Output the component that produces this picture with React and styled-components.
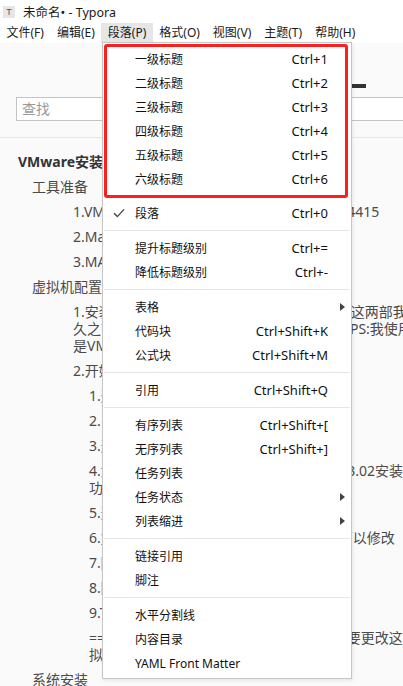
import React from 'react';
import styled, { createGlobalStyle } from 'styled-components';

const GlobalStyle = createGlobalStyle`
  html, body {
    margin: 0;
    padding: 0;
  }
  body {
    background: #fafafa;
    overflow: hidden;
    font-family: "Noto Sans", "Noto Sans CJK SC", sans-serif;
  }
`;

const Window = styled.div`
  position: relative;
  width: 403px;
  height: 686px;
  overflow: hidden;
  background: #fafafa;
`;

const TitleBar = styled.div`
  height: 23px;
  display: flex;
  align-items: center;
  padding-left: 3px;
  background: #fff;
`;

const AppIcon = styled.div`
  width: 12px;
  height: 12px;
  background: #e6e6e6;
  color: #555;
  font: 9px "Liberation Sans", sans-serif;
  display: flex;
  align-items: center;
  justify-content: center;
`;

const Title = styled.span`
  margin-left: 8px;
  font-size: 12.5px;
  color: #1a1a1a;
`;

const MenuBar = styled.div`
  height: 20px;
  display: flex;
  background: #fff;
`;

const MenuTitle = styled.div`
  padding: 0 6.5px;
  line-height: 20px;
  font-size: 12px;
  color: #1a1a1a;
  white-space: nowrap;
  background: ${p => (p.$open ? '#e6e6e6' : 'transparent')};
`;

const Sidebar = styled.div`
  background: #fafafa;
`;

const SidebarHeader = styled.div`
  height: 54px;
  display: flex;
  align-items: flex-start;
`;

const TabMark = styled.div`
  margin: 41px 0 0 352px;
  width: 14px;
  height: 4px;
  background: #333;
`;

const SearchRow = styled.div`
  padding: 0 0 16px 16px;
  border-bottom: 1px solid #e6e6e6;
`;

const SearchBox = styled.div`
  width: 600px;
  height: 22px;
  border: 1px solid #c4c4c4;
  border-right: none;
  background: #fff;
  padding-left: 5px;
  font-size: 14px;
  line-height: 22px;
  color: #999;
`;

const Outline = styled.div`
  padding-top: 11px;
`;

const OutlineItem = styled.div`
  padding: 4px 0 4px ${p => p.$indent}px;
  font-size: 14px;
  line-height: 17px;
  white-space: nowrap;
  color: ${p => (p.$bold ? '#333' : '#4a4a4a')};
  font-weight: ${p => (p.$bold ? 700 : 400)};
`;

const Dropdown = styled.div`
  position: absolute;
  left: 102px;
  top: 42px;
  width: 250px;
  box-sizing: border-box;
  padding: 1px 0 3px;
  background: #fff;
  border: 1px solid #c6c6c6;
  box-shadow: 1px 2px 3px rgba(0, 0, 0, 0.08);
`;

const Row = styled.div`
  display: flex;
  align-items: center;
  height: 24px;
  padding: 0 6px 0 10px;
  font-size: 12px;
  color: #111;
  white-space: nowrap;
`;

const Highlight = styled.div`
  margin: 0 3px 3px 1px;
  padding-bottom: 4px;
  border: 3px solid #ff1e1e;
  border-radius: 3px;

  ${Row} {
    padding: 0 0 0 6px;
  }
`;

const CheckSlot = styled.span`
  width: 22px;
  display: flex;
  align-items: center;
`;

const Label = styled.span`
  flex: 1;
`;

const Keys = styled.span`
  margin-right: 12px;
  font-size: 13px;
`;

const ArrowSlot = styled.span`
  width: 0;
  height: 0;
  border-left: 5px solid ${p => (p.$show ? '#444' : 'transparent')};
  border-top: 4px solid transparent;
  border-bottom: 4px solid transparent;
`;

const Sep = styled.div`
  height: 1px;
  margin: 5px 1px;
  background: #e6e6e6;
`;

const menus = ['文件(F)', '编辑(E)', '段落(P)', '格式(O)', '视图(V)', '主题(T)', '帮助(H)'];

const headings = [
  ['一级标题', 'Ctrl+1'],
  ['二级标题', 'Ctrl+2'],
  ['三级标题', 'Ctrl+3'],
  ['四级标题', 'Ctrl+4'],
  ['五级标题', 'Ctrl+5'],
  ['六级标题', 'Ctrl+6'],
];

const groups = [
  [{ label: '段落', keys: 'Ctrl+0', checked: true }],
  [
    { label: '提升标题级别', keys: 'Ctrl+=' },
    { label: '降低标题级别', keys: 'Ctrl+-' },
  ],
  [
    { label: '表格', sub: true },
    { label: '代码块', keys: 'Ctrl+Shift+K' },
    { label: '公式块', keys: 'Ctrl+Shift+M' },
  ],
  [{ label: '引用', keys: 'Ctrl+Shift+Q' }],
  [
    { label: '有序列表', keys: 'Ctrl+Shift+[' },
    { label: '无序列表', keys: 'Ctrl+Shift+]' },
    { label: '任务列表' },
    { label: '任务状态', sub: true },
    { label: '列表缩进', sub: true },
  ],
  [{ label: '链接引用' }, { label: '脚注' }],
  [{ label: '水平分割线' }, { label: '内容目录' }, { label: 'YAML Front Matter' }],
];

const outline = [
  { indent: 18, bold: true, lines: ['VMware安装黑苹果系统'] },
  { indent: 32, lines: ['工具准备'] },
  { indent: 73, lines: ['1.VMware工作站专业版十五，激活码尾号为4415'] },
  { indent: 73, lines: ['2.Mac OS X 10.15 镜像'] },
  { indent: 73, lines: ['3.MAC OS X Unlocker'] },
  { indent: 32, lines: ['虚拟机配置'] },
  {
    indent: 73,
    lines: [
      '1.安装虚拟机软件和苹果系统解锁补丁工具，这两部我很',
      '久之前就已经安装好了所以这里不再赘述。\u00a0\u00a0\u00a0PS:我使用的',
      '是VMware 15 Pro版本',
    ],
  },
  { indent: 73, lines: ['2.开始创建虚拟机'] },
  { indent: 89, lines: ['1.选择自定义安装'] },
  { indent: 89, lines: ['2.目标系统稍后安装'] },
  { indent: 89, lines: ['3.选择Apple Mac OS X'] },
  { indent: 89, lines: ['4.如果安装时提示错误，请使用解锁工具V3.02安装补丁后重新打开即可成', '功'] },
  { indent: 89, lines: ['5.选择虚拟机存放位置'] },
  { indent: 89, lines: ['6.复制下方代码到配置文件末尾，保存即可以修改'] },
  { indent: 89, lines: ['7.随后开启虚拟机'] },
  { indent: 89, lines: ['8.除此之外还需设置'] },
  { indent: 89, lines: ['9.Tips：关闭虚拟机'] },
  { indent: 89, lines: ['== 安装完成后如果觉得屏幕显示太小就需要更改这里的虚', '拟机分辨率 =='] },
  { indent: 32, lines: ['系统安装'] },
];

const CheckIcon = () => (
  <svg width="12" height="10" viewBox="0 0 12 10">
    <path d="M1 5.2 L4.4 8.6 L11 1.4" fill="none" stroke="#444" strokeWidth="1.4" />
  </svg>
);

const MenuRow = ({ label, keys, checked, sub }) => (
  <Row>
    <CheckSlot>{checked && <CheckIcon />}</CheckSlot>
    <Label>{label}</Label>
    {keys && <Keys>{keys}</Keys>}
    <ArrowSlot $show={sub} />
  </Row>
);

const App = () => (
  <Window>
    <GlobalStyle />
    <TitleBar>
      <AppIcon>T</AppIcon>
      <Title>未命名• - Typora</Title>
    </TitleBar>
    <MenuBar>
      {menus.map(m => (
        <MenuTitle key={m} $open={m === '段落(P)'}>{m}</MenuTitle>
      ))}
    </MenuBar>
    <Sidebar>
      <SidebarHeader>
        <TabMark />
      </SidebarHeader>
      <SearchRow>
        <SearchBox>查找</SearchBox>
      </SearchRow>
      <Outline>
        {outline.map((item, i) => (
          <OutlineItem key={i} $indent={item.indent} $bold={item.bold}>
            {item.lines.map((line, j) => (
              <div key={j}>{line}</div>
            ))}
          </OutlineItem>
        ))}
      </Outline>
    </Sidebar>
    <Dropdown>
      <Highlight>
        {headings.map(([label, keys]) => (
          <MenuRow key={label} label={label} keys={keys} />
        ))}
      </Highlight>
      {groups.map((group, i) => (
        <React.Fragment key={i}>
          {i > 0 && <Sep />}
          {group.map(item => (
            <MenuRow key={item.label} {...item} />
          ))}
        </React.Fragment>
      ))}
    </Dropdown>
  </Window>
);

export default App;
